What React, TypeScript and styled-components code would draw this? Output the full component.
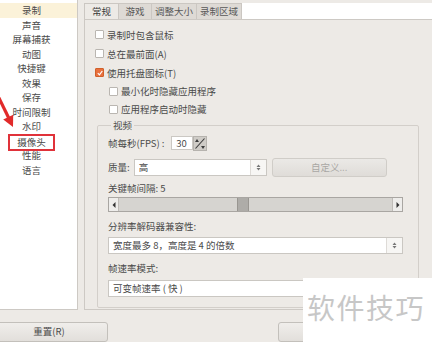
import React from 'react';
import styled, { createGlobalStyle } from 'styled-components';

const GlobalStyle = createGlobalStyle`
  html, body {
    margin: 0;
    padding: 0;
  }
  body {
    font-family: "Noto Sans CJK SC", "Noto Sans", sans-serif;
    font-size: 9.5px;
    color: #4a4a4a;
    background: #edeae6;
  }
`;

const Window = styled.div`
  position: relative;
  width: 432px;
  height: 342px;
  overflow: hidden;
  background: #edeae6;
  display: flex;
  flex-direction: column;
`;

const Body = styled.div`
  display: flex;
  gap: 6px;
  height: 320px;
`;

const Sidebar = styled.ul`
  list-style: none;
  margin: 0 0 0 -14px;
  padding: 3px 0 0;
  width: 92px;
  flex-shrink: 0;
  box-sizing: border-box;
  background: #fff;
  border-right: 1px solid #cdc9c4;
  border-bottom: 1px solid #cdc9c4;
`;

const NavItem = styled.li<{ $active?: boolean }>`
  height: 14.5px;
  line-height: 14.5px;
  text-align: center;
  white-space: nowrap;
  background: ${(p) => (p.$active ? '#fbf2d9' : 'transparent')};
`;

const Marked = styled.span`
  display: inline-block;
  padding: 0 7px;
  line-height: 13px;
  border: 2px solid #e0323a;
`;

const Main = styled.div`
  flex: 1;
  margin-right: -30px;
  padding-top: 3px;
  display: flex;
  flex-direction: column;
`;

const TabBar = styled.div`
  display: flex;
  height: 16px;
  background: #fff;
`;

const Tab = styled.div<{ $active?: boolean }>`
  min-width: ${(p) => (p.$active ? '35px' : '33px')};
  padding: 0 3px;
  box-sizing: border-box;
  line-height: 15px;
  text-align: center;
  border: 1px solid #cbc7c2;
  border-bottom: none;
  border-left-width: ${(p) => (p.$active ? '1px' : '0')};
  background: ${(p) => (p.$active ? '#edeae6' : '#dedad5')};
  color: ${(p) => (p.$active ? '#3a3a3a' : '#585858')};
`;

const TabPanel = styled.div`
  flex: 1;
  border: 1px solid #cdc9c4;
  border-right: none;
  padding: 5px 0 0 10px;
`;

const CheckRow = styled.label<{ $indent?: number; $h: number }>`
  display: flex;
  align-items: center;
  gap: 3px;
  height: ${(p) => p.$h}px;
  padding-left: ${(p) => p.$indent ?? 0}px;
`;

const Box = styled.span<{ $checked?: boolean }>`
  width: 7px;
  height: 7px;
  border-radius: 1px;
  border: 1px solid ${(p) => (p.$checked ? '#d1602a' : '#bab6b1')};
  background: ${(p) => (p.$checked ? '#e8703e' : '#fff')};
  display: flex;
  align-items: center;
  justify-content: center;
`;

const Group = styled.fieldset`
  margin: 1px 0 0 2px;
  width: 322px;
  box-sizing: border-box;
  padding: 0 15px 10px 10px;
  border: 1px solid #d3cfca;
  border-radius: 2px;
`;

const Legend = styled.legend`
  padding: 0 2px;
  margin-left: 3px;
  line-height: 12px;
`;

const Row = styled.div<{ $top: number; $h: number }>`
  display: flex;
  align-items: center;
  gap: 4px;
  margin-top: ${(p) => p.$top}px;
  height: ${(p) => p.$h}px;
`;

const Caption = styled.div<{ $top: number }>`
  margin-top: ${(p) => p.$top}px;
  line-height: 12px;
`;

const SpinInput = styled.div`
  margin-left: 2px;
  width: 22px;
  height: 14px;
  box-sizing: border-box;
  background: #fff;
  border: 1px solid #cbc8c3;
  text-align: center;
  line-height: 12px;
`;

const SpinButton = styled.div`
  width: 14px;
  height: 15px;
  margin-left: -4px;
  box-sizing: border-box;
  background: #cfccc7;
  border: 1px solid #b6b3ae;
  display: flex;
`;

const Combo = styled.div<{ $w?: number }>`
  display: flex;
  height: 17px;
  box-sizing: border-box;
  width: ${(p) => (p.$w ? `${p.$w}px` : '100%')};
  background: #fff;
  border: 1px solid #cac7c2;
`;

const ComboText = styled.div`
  flex: 1;
  padding-left: 4px;
  line-height: 15px;
  white-space: nowrap;
`;

const ComboArrow = styled.div`
  width: 15px;
  border-left: 1px solid #dedbd7;
  background: #f7f6f4;
  display: flex;
  align-items: center;
  justify-content: center;
`;

const PushButton = styled.div<{ $disabled?: boolean }>`
  width: 115px;
  height: 19px;
  margin-left: 1px;
  box-sizing: border-box;
  border: 1px solid #d0cdc8;
  border-radius: 3px;
  background: linear-gradient(#ebe9e6, #dfdcd8);
  text-align: center;
  line-height: 17px;
  color: ${(p) => (p.$disabled ? '#a9a7a4' : '#3f3f3f')};
`;

const Slider = styled.div`
  display: flex;
  margin-top: 3px;
  height: 15px;
  box-sizing: border-box;
  border: 1px solid #a9a6a2;
  background: #d6d4d0;
`;

const StepButton = styled.div`
  width: 9px;
  background: #eeedeb;
  display: flex;
  align-items: center;
  justify-content: center;
  border-right: 1px solid #bfbcb8;
  &:last-child {
    border-right: none;
    border-left: 1px solid #bfbcb8;
  }
`;

const Track = styled.div`
  flex: 1;
  display: flex;
  padding-left: 118px;
`;

const Thumb = styled.div`
  width: 10px;
  background: #aeaca8;
  border-left: 1px solid #999691;
  border-right: 1px solid #999691;
`;

const ButtonRow = styled.div`
  display: flex;
  padding-top: 12px;
`;

const DialogButton = styled.div<{ $w: number; $left: number }>`
  width: ${(p) => p.$w}px;
  margin-left: ${(p) => p.$left}px;
  height: 20px;
  box-sizing: border-box;
  border: 1px solid #c3c0bb;
  border-radius: 3px;
  background: linear-gradient(#f0eeeb, #e2dfdb);
  text-align: center;
  line-height: 16px;
`;

const Watermark = styled.div`
  position: absolute;
  left: 303px;
  top: 278px;
  right: 0;
  bottom: 0;
  background: #fff;
  padding: 12px 0 0 4px;
  font-size: 28px;
  letter-spacing: 1.5px;
  color: #c7c7c7;
  line-height: 34px;
`;

const ArrowMark = styled.svg`
  position: absolute;
  left: 0;
  top: 92px;
`;

const navItems = ['录制', '声音', '屏幕捕获', '动图', '快捷键', '效果', '保存', '时间限制', '水印', '摄像头', '性能', '语言'];
const tabs = ['常规', '游戏', '调整大小', '录制区域'];

function Updown() {
  return (
    <svg width="5" height="7" viewBox="0 0 5 7">
      <path d="M0.5 3 L2.5 0.5 L4.5 3 Z M0.5 4 L2.5 6.5 L4.5 4 Z" fill="#777" />
    </svg>
  );
}

function App() {
  return (
    <Window>
      <GlobalStyle />
      <Body>
        <Sidebar>
          {navItems.map((item, i) => (
            <NavItem key={item} $active={i === 0}>
              {item === '摄像头' ? <Marked>{item}</Marked> : item}
            </NavItem>
          ))}
        </Sidebar>
        <Main>
          <TabBar>
            {tabs.map((t, i) => (
              <Tab key={t} $active={i === 0}>
                {t}
              </Tab>
            ))}
          </TabBar>
          <TabPanel>
            <CheckRow $h={19}>
              <Box />
              录制时包含鼠标
            </CheckRow>
            <CheckRow $h={19}>
              <Box />
              总在最前面(A)
            </CheckRow>
            <CheckRow $h={19}>
              <Box $checked>
                <svg width="6" height="6" viewBox="0 0 6 6">
                  <path d="M0.8 3.2 L2.4 4.8 L5.3 1" stroke="#fff" strokeWidth="1.2" fill="none" />
                </svg>
              </Box>
              使用托盘图标(T)
            </CheckRow>
            <CheckRow $h={18} $indent={14}>
              <Box />
              最小化时隐藏应用程序
            </CheckRow>
            <CheckRow $h={18} $indent={14}>
              <Box />
              应用程序启动时隐藏
            </CheckRow>
            <Group>
              <Legend>视频</Legend>
              <Row $top={4} $h={16}>
                帧每秒(FPS) :
                <SpinInput>30</SpinInput>
                <SpinButton>
                  <svg width="12" height="13" viewBox="0 0 12 13">
                    <path d="M1.5 11.5 L10.5 1.5" stroke="#3c3c3c" strokeWidth="1.1" />
                    <path d="M1 5 L3 2 L5 5 Z" fill="#3c3c3c" />
                    <path d="M7 9 L9 12 L11 9 Z" fill="#3c3c3c" />
                  </svg>
                </SpinButton>
              </Row>
              <Row $top={7} $h={18}>
                质量:
                <Combo $w={133}>
                  <ComboText>高</ComboText>
                  <ComboArrow>
                    <Updown />
                  </ComboArrow>
                </Combo>
                <PushButton $disabled>自定义...</PushButton>
              </Row>
              <Caption $top={6}>关键帧间隔: 5</Caption>
              <Slider>
                <StepButton>
                  <svg width="4" height="6" viewBox="0 0 4 6">
                    <path d="M3.5 0 L0.5 3 L3.5 6 Z" fill="#333" />
                  </svg>
                </StepButton>
                <Track>
                  <Thumb />
                </Track>
                <StepButton>
                  <svg width="4" height="6" viewBox="0 0 4 6">
                    <path d="M0.5 0 L3.5 3 L0.5 6 Z" fill="#333" />
                  </svg>
                </StepButton>
              </Slider>
              <Caption $top={8}>分辨率解码器兼容性:</Caption>
              <Row $top={5} $h={17}>
                <Combo>
                  <ComboText>宽度最多 8，高度是 4 的倍数</ComboText>
                  <ComboArrow>
                    <Updown />
                  </ComboArrow>
                </Combo>
              </Row>
              <Caption $top={8}>帧速率模式:</Caption>
              <Row $top={6} $h={17}>
                <Combo>
                  <ComboText>可变帧速率 ( 快 )</ComboText>
                  <ComboArrow>
                    <Updown />
                  </ComboArrow>
                </Combo>
              </Row>
            </Group>
          </TabPanel>
        </Main>
      </Body>
      <ButtonRow>
        <DialogButton $w={118} $left={-10}>
          重置(R)
        </DialogButton>
        <DialogButton $w={80} $left={170} />
      </ButtonRow>
      <ArrowMark width="22" height="40" viewBox="0 0 22 40">
        <path d="M-3 2 L8.5 25.5" stroke="#e12a2a" strokeWidth="3.2" />
        <path d="M13 35 L3.2 27.5 L13.2 22.7 Z" fill="#e12a2a" />
      </ArrowMark>
      <Watermark>软件技巧</Watermark>
    </Window>
  );
}

export default App;
